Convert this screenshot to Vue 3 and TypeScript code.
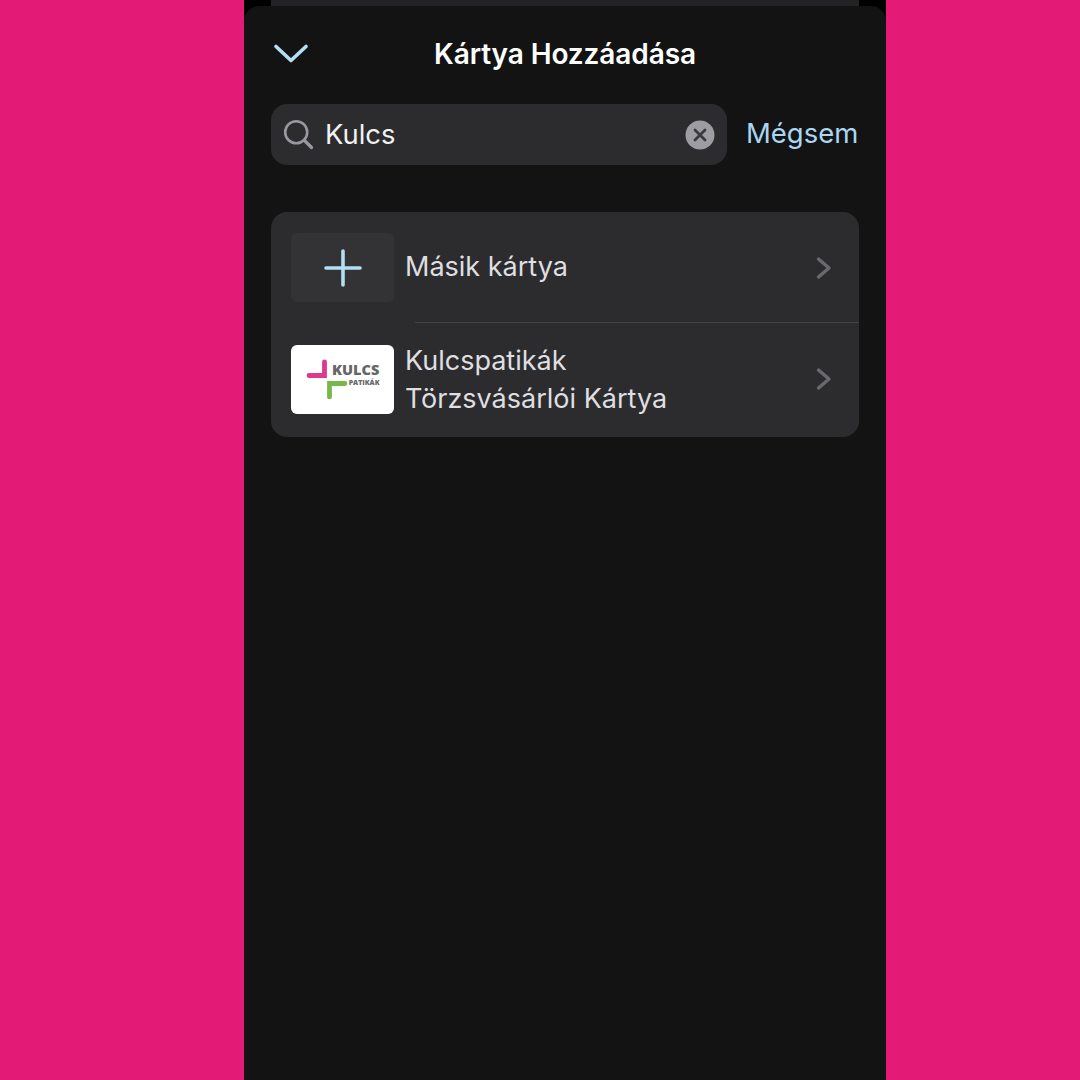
<script setup lang="ts">
interface Row { id: string; lines: string[] }
const rows: Row[] = [
  { id: 'other', lines: ['Másik kártya'] },
  { id: 'kulcs', lines: ['Kulcspatikák', 'Törzsvásárlói Kártya'] },
]
</script>

<template>
  <div class="page">
    <div class="phone">
      <div class="behind"></div>
      <section class="sheet">
        <header class="head">
          <svg class="down" width="36" height="24" viewBox="0 0 36 24">
            <path d="M3 4.5 L18 18.5 L33 4.5" fill="none" stroke="#b5def5" stroke-width="3.7" stroke-linecap="round" stroke-linejoin="round" />
          </svg>
          <h1 class="title">Kártya Hozzáadása</h1>
        </header>
        <div class="search-row">
          <div class="search">
            <svg class="glass" width="32" height="32" viewBox="0 0 32 32">
              <circle cx="13.2" cy="13.2" r="11" fill="none" stroke="#98989e" stroke-width="2.6" />
              <path d="M21.5 21.5 L28.5 28.5" stroke="#98989e" stroke-width="3.2" stroke-linecap="round" />
            </svg>
            <span class="query">Kulcs</span>
            <svg class="clear" width="30" height="30" viewBox="0 0 30 30">
              <circle cx="15" cy="15" r="14.5" fill="#9d9da3" />
              <path d="M10 10 L20 20 M20 10 L10 20" stroke="#3a3a3f" stroke-width="2.8" stroke-linecap="round" />
            </svg>
          </div>
          <span class="cancel">Mégsem</span>
        </div>
        <div class="list">
          <div v-for="r in rows" :key="r.id" class="row" :class="'row-' + r.id">
            <div v-if="r.id === 'other'" class="thumb thumb-add">
              <svg width="38" height="38" viewBox="0 0 38 38">
                <path d="M19 2 V36 M2 19 H36" stroke="#b5def5" stroke-width="3.6" stroke-linecap="round" />
              </svg>
            </div>
            <div v-else class="thumb thumb-logo">
              <svg class="mark" width="42" height="40" viewBox="0 0 42 40">
                <path d="M18.5 3 V16.5 H3" fill="none" stroke="#dc3a8c" stroke-width="4.8" stroke-linecap="round" stroke-linejoin="miter" />
                <path d="M39 24.5 H23.5 V38" fill="none" stroke="#77b84a" stroke-width="4.8" stroke-linecap="round" stroke-linejoin="miter" />
              </svg>
              <div class="brand">
                <span class="brand-main">KULCS</span>
                <span class="brand-sub">PATIKÁK</span>
              </div>
            </div>
            <div class="label">
              <span v-for="l in r.lines" :key="l">{{ l }}</span>
            </div>
            <svg class="chev" width="16" height="24" viewBox="0 0 16 24">
              <path d="M2.5 3 L13 12 L2.5 21" fill="none" stroke="#6a6a6e" stroke-width="3.4" stroke-linecap="round" stroke-linejoin="round" />
            </svg>
          </div>
        </div>
      </section>
    </div>
  </div>
</template>

<style>
html, body { margin: 0; background: #e31b77; }
</style>

<style scoped>
.page {
  width: 1080px;
  height: 1080px;
  background: #e31b77;
  display: flex;
  padding-left: 244px;
  box-sizing: border-box;
  overflow: hidden;
  font-family: Inter, "Liberation Sans", sans-serif;
}
.phone {
  width: 642px;
  background: #000;
  display: flex;
  flex-direction: column;
  position: relative;
}
.behind {
  position: absolute;
  left: 27px;
  right: 27px;
  top: 0;
  height: 6px;
  background: #232325;
}
.sheet {
  margin-top: 6px;
  flex: 1;
  background: #131313;
  border-radius: 15px 15px 0 0;
  padding: 0 27px;
  display: flex;
  flex-direction: column;
  position: relative;
}
.head {
  height: 98px;
  padding-bottom: 2px;
  box-sizing: border-box;
  display: flex;
  align-items: center;
  justify-content: center;
  position: relative;
}
.down { position: absolute; left: 2px; top: 36px; }
.title {
  margin: 0;
  font-size: 28px;
  font-weight: 600;
  color: #fff;
  letter-spacing: -0.1px;
}
.search-row {
  display: flex;
  align-items: center;
  gap: 19px;
}
.search {
  width: 456px;
  height: 61px;
  box-sizing: border-box;
  background: #2c2c2e;
  border-radius: 16px;
  display: flex;
  align-items: center;
  padding: 0 12px;
}
.glass { flex: none; }
.query {
  flex: 1;
  margin-left: 10px;
  padding-bottom: 1px;
  font-size: 27.4px;
  color: #f2f2f3;
}
.clear { flex: none; }
.cancel {
  font-size: 27.5px;
  padding-bottom: 4px;
  color: #a9d7f2;
}
.list {
  margin-top: 47px;
  background: #2c2c2e;
  border-radius: 16px;
  display: flex;
  flex-direction: column;
}
.row {
  display: flex;
  align-items: center;
  padding: 0 27px 0 20px;
  position: relative;
}
.row-other { height: 111px; }
.row-kulcs { height: 114px; padding-bottom: 2px; box-sizing: border-box; }
.row-other::after {
  content: "";
  position: absolute;
  left: 144px;
  right: 0;
  bottom: 0;
  height: 1px;
  background: #434346;
}
.thumb {
  width: 103px;
  height: 69px;
  border-radius: 6px;
  flex: none;
  display: flex;
  align-items: center;
  justify-content: center;
}
.thumb-add { background: #333335; }
.thumb-logo {
  background: #fff;
  justify-content: flex-start;
  padding-left: 15px;
  box-sizing: border-box;
}
.mark { flex: none; margin-right: -16px; }
.brand {
  align-self: flex-start;
  margin-top: 17px;
  display: flex;
  flex-direction: column;
  align-items: flex-end;
  line-height: 1;
  color: #666669;
  font-family: "Open Sans", "Liberation Sans", sans-serif;
  font-weight: 800;
}
.brand-main { font-size: 14.6px; line-height: 14px; }
.brand-sub { font-size: 7px; line-height: 8px; margin-top: 3px; }
.label {
  flex: 1;
  margin-left: 11px;
  padding-bottom: 1px;
  display: flex;
  flex-direction: column;
  font-size: 27px;
  line-height: 38px;
  color: #dfdfe1;
}
.row-kulcs .label { padding: 2px 0 0; }
.chev { flex: none; }
</style>
